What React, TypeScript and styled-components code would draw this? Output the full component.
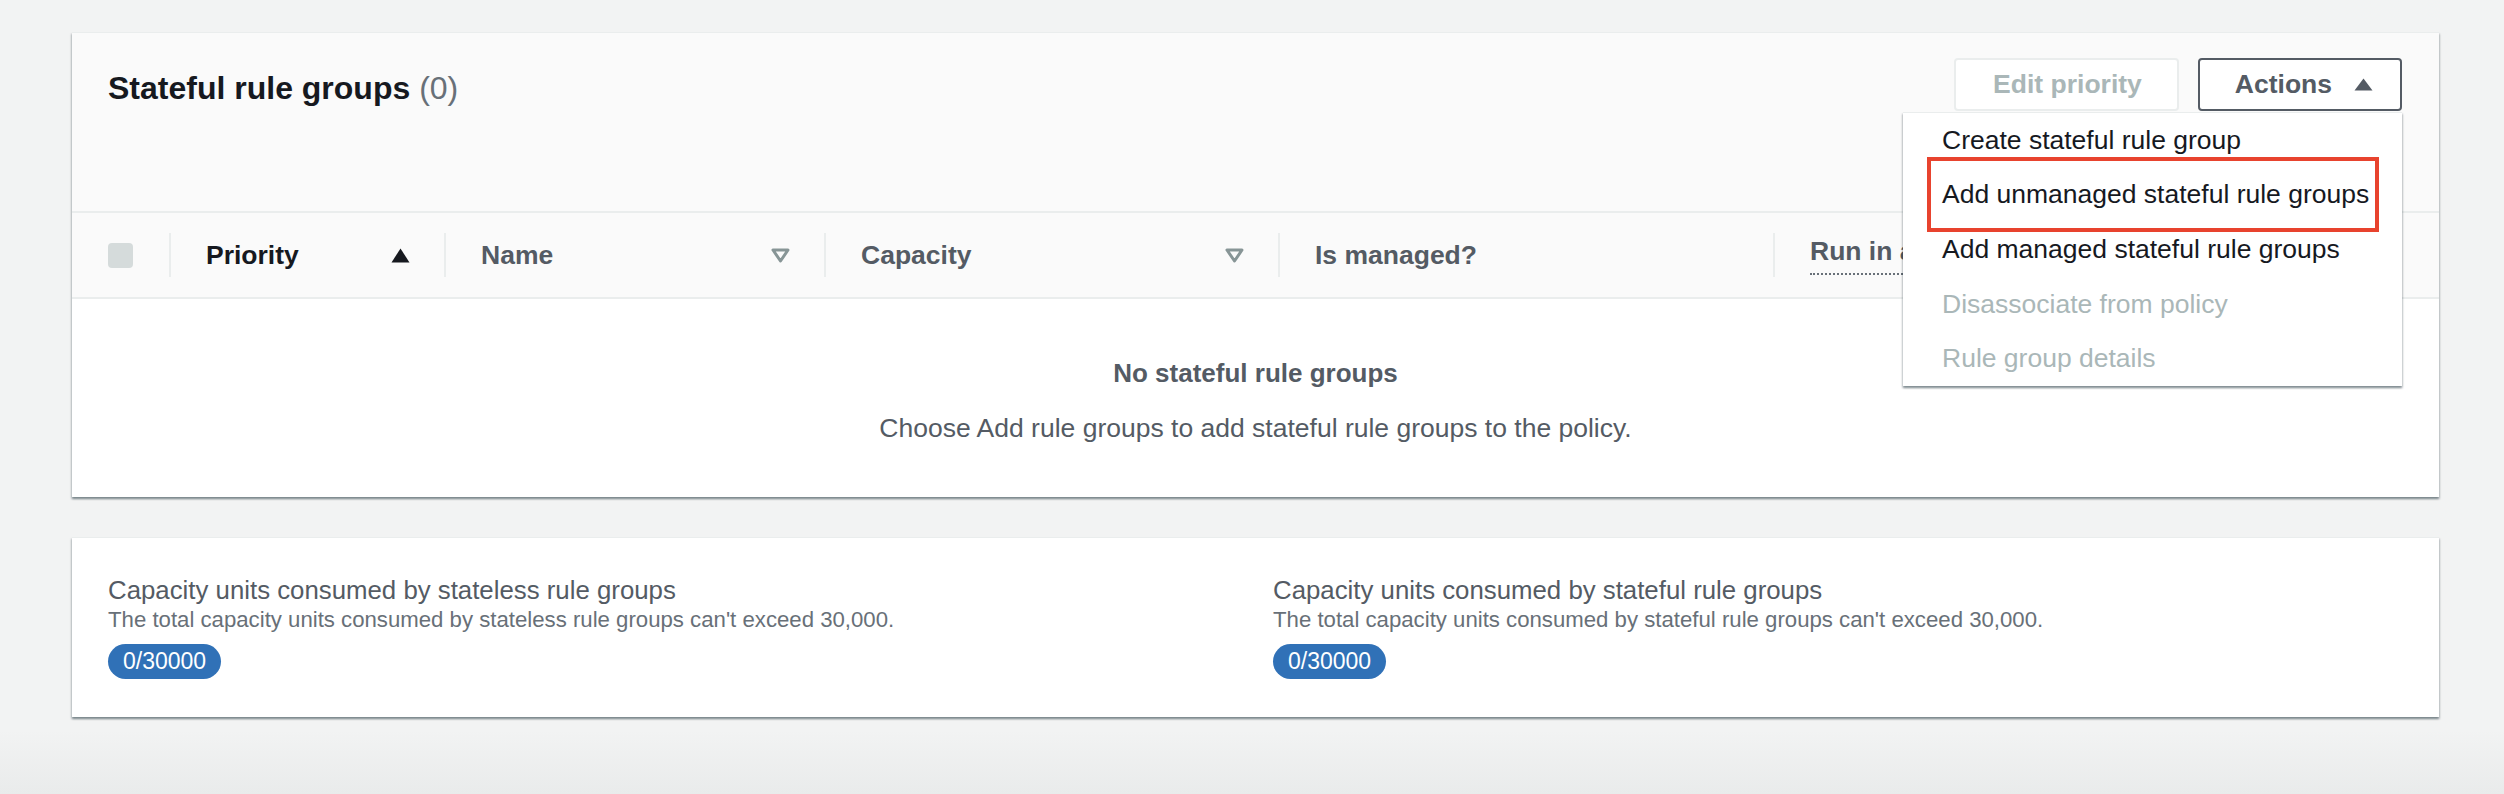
import React from "react";
import styled, { createGlobalStyle } from "styled-components";

const GlobalStyle = createGlobalStyle`
  html, body { margin: 0; padding: 0; }
  body {
    min-height: 794px;
    background: linear-gradient(to bottom, #f2f3f3 0, #f2f3f3 730px, #e9ebeb 794px);
    font-family: "Liberation Sans", Arial, sans-serif;
    color: #16191f;
  }
  * { box-sizing: border-box; }
`;

const Page = styled.div`
  padding: 32px 65px 0 72px;
  display: flex;
  flex-direction: column;
  gap: 40px;
`;

const Card = styled.section`
  background: #fff;
  border-top: 1px solid #eaeded;
  box-shadow: 0 2px 2px 0 rgba(0, 28, 36, 0.3), 1px 2px 2px 0 rgba(0, 28, 36, 0.15),
    -1px 2px 2px 0 rgba(0, 28, 36, 0.15);
`;

const CardHeader = styled.header`
  height: 178px;
  padding: 25px 37px 0 36px;
  background: #fafafa;
  display: flex;
  justify-content: space-between;
  align-items: flex-start;
`;

const Title = styled.h2`
  margin: 0;
  padding-top: 4px;
  font-size: 32px;
  font-weight: 700;
  line-height: 53px;
  color: #16191f;
`;

const Counter = styled.span`
  font-weight: 400;
  color: #687078;
`;

const ActionGroup = styled.div`
  position: relative;
  display: flex;
  gap: 19px;
`;

const Button = styled.button<{ $variant: "disabled" | "normal" }>`
  height: 53px;
  display: inline-flex;
  align-items: center;
  gap: 22px;
  border: 2px solid ${(p) => (p.$variant === "disabled" ? "#eaeded" : "#545b64")};
  border-radius: 4px;
  background: #fff;
  padding: ${(p) => (p.$variant === "disabled" ? "0 35px 0 37px" : "0 27px 0 35px")};
  font-family: "Liberation Sans", Arial, sans-serif;
  font-size: 26.5px;
  font-weight: 700;
  color: ${(p) => (p.$variant === "disabled" ? "#aab7b8" : "#545b64")};
  cursor: ${(p) => (p.$variant === "disabled" ? "default" : "pointer")};
`;

const Menu = styled.ul`
  position: absolute;
  top: calc(100% + 1px);
  right: 0;
  width: 499px;
  margin: 0;
  padding: 0;
  list-style: none;
  background: #fff;
  border-top: 1px solid #eaeded;
  box-shadow: 0 2px 2px 0 rgba(0, 28, 36, 0.3), 1px 2px 2px 0 rgba(0, 28, 36, 0.15),
    -1px 2px 2px 0 rgba(0, 28, 36, 0.15);
  z-index: 10;
`;

const MenuItem = styled.li<{ $disabled?: boolean; $highlight?: boolean }>`
  position: relative;
  height: 54.6px;
  display: flex;
  align-items: center;
  padding-left: 39px;
  font-size: 26.5px;
  color: ${(p) => (p.$disabled ? "#aab7b8" : "#16191f")};
  white-space: nowrap;
  ${(p) =>
    p.$highlight &&
    `
    &::after {
      content: "";
      position: absolute;
      left: 24px;
      right: 23px;
      top: -11px;
      bottom: -10px;
      border: 4px solid #e8432e;
    }
  `}
`;

const TableHead = styled.div`
  display: grid;
  grid-template-columns: 97px 275px 380px 454px 495px 1fr;
  height: 88px;
  background: #fafafa;
  border-top: 2px solid #eaeded;
  border-bottom: 2px solid #eaeded;
`;

const HeadCell = styled.div<{ $active?: boolean; $first?: boolean }>`
  display: flex;
  align-items: center;
  justify-content: space-between;
  padding: ${(p) => (p.$first ? "0 0 0 36px" : "0 34px 0 37px")};
  font-size: 26.5px;
  font-weight: 700;
  color: ${(p) => (p.$active ? "#16191f" : "#545b64")};
  white-space: nowrap;
  overflow: hidden;
  background: ${(p) =>
    p.$first ? "none" : "linear-gradient(#eaeded, #eaeded) left center / 2px 44px no-repeat"};
`;

const Checkbox = styled.span`
  width: 25px;
  height: 25px;
  border-radius: 4px;
  background: #d5dbdb;
`;

const Hint = styled.span`
  padding-bottom: 6px;
  border-bottom: 2px dotted #687078;
`;

const EmptyState = styled.div`
  padding: 54px 0 49px;
  text-align: center;
  color: #545b64;
  font-size: 26.5px;
`;

const EmptyTitle = styled.div`
  font-weight: 700;
  font-size: 26px;
  line-height: 40px;
`;

const EmptyText = styled.div`
  margin-top: 15px;
  line-height: 40px;
`;

const SummaryGrid = styled.div`
  padding: 36px 36px 38px;
  display: grid;
  grid-template-columns: 1fr 1fr;
  column-gap: 35px;
`;

const Metric = styled.div`
  display: flex;
  flex-direction: column;
  align-items: flex-start;
`;

const MetricLabel = styled.div`
  font-size: 25.8px;
  line-height: 32px;
  color: #545b64;
`;

const MetricDesc = styled.div`
  font-size: 22.2px;
  line-height: 28px;
  color: #687078;
`;

const Badge = styled.span`
  margin-top: 10px;
  height: 35px;
  line-height: 35px;
  padding: 0 15px;
  border-radius: 18px;
  background: #3071b7;
  color: #fff;
  font-size: 23px;
`;

const SortUp = () => (
  <svg width="19" height="15" viewBox="0 0 19 15">
    <polygon points="9.5,0.5 18.5,14.5 0.5,14.5" fill="#16191f" />
  </svg>
);

const SortNone = () => (
  <svg width="19" height="15" viewBox="0 0 19 15">
    <polygon
      points="2,2 17,2 9.5,13"
      fill="none"
      stroke="#879596"
      strokeWidth="3"
      strokeLinejoin="round"
    />
  </svg>
);

const CaretUp = () => (
  <svg width="19" height="13" viewBox="0 0 19 13">
    <polygon points="9.5,0.5 18.5,12.5 0.5,12.5" fill="#545b64" strokeLinejoin="round" />
  </svg>
);

export default function App() {
  return (
    <>
      <GlobalStyle />
      <Page>
        <Card>
          <CardHeader>
            <Title>
              Stateful rule groups <Counter>(0)</Counter>
            </Title>
            <ActionGroup>
              <Button $variant="disabled">Edit priority</Button>
              <Button $variant="normal">
                Actions
                <CaretUp />
              </Button>
              <Menu>
                <MenuItem>Create stateful rule group</MenuItem>
                <MenuItem $highlight>Add unmanaged stateful rule groups</MenuItem>
                <MenuItem>Add managed stateful rule groups</MenuItem>
                <MenuItem $disabled>Disassociate from policy</MenuItem>
                <MenuItem $disabled>Rule group details</MenuItem>
              </Menu>
            </ActionGroup>
          </CardHeader>
          <TableHead>
            <HeadCell $first>
              <Checkbox />
            </HeadCell>
            <HeadCell $active>
              Priority
              <SortUp />
            </HeadCell>
            <HeadCell>
              Name
              <SortNone />
            </HeadCell>
            <HeadCell>
              Capacity
              <SortNone />
            </HeadCell>
            <HeadCell>Is managed?</HeadCell>
            <HeadCell>
              <Hint>Run in alert mode</Hint>
            </HeadCell>
          </TableHead>
          <EmptyState>
            <EmptyTitle>No stateful rule groups</EmptyTitle>
            <EmptyText>Choose Add rule groups to add stateful rule groups to the policy.</EmptyText>
          </EmptyState>
        </Card>
        <Card>
          <SummaryGrid>
            <Metric>
              <MetricLabel>Capacity units consumed by stateless rule groups</MetricLabel>
              <MetricDesc>
                The total capacity units consumed by stateless rule groups can't exceed 30,000.
              </MetricDesc>
              <Badge>0/30000</Badge>
            </Metric>
            <Metric>
              <MetricLabel>Capacity units consumed by stateful rule groups</MetricLabel>
              <MetricDesc>
                The total capacity units consumed by stateful rule groups can't exceed 30,000.
              </MetricDesc>
              <Badge>0/30000</Badge>
            </Metric>
          </SummaryGrid>
        </Card>
      </Page>
    </>
  );
}
